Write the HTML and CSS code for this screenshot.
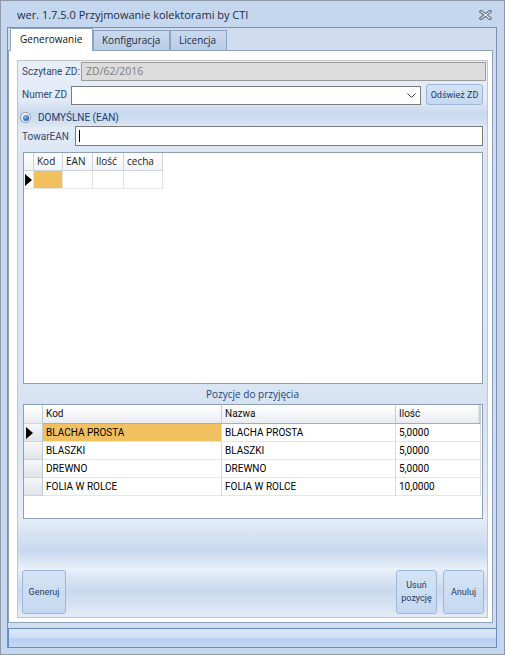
FILE: index.html
```html
<!DOCTYPE html>
<html lang="pl">
<head>
<meta charset="utf-8">
<title>Przyjmowanie kolektorami</title>
<link rel="stylesheet" href="styles.css">
</head>
<body>
<div class="window">
  <div class="titlebar">
    <span class="title">wer. 1.7.5.0 Przyjmowanie kolektorami by CTI</span>
    <svg class="close" width="13" height="10" viewBox="0 0 13 10">
      <path d="M2 1.5 L11 8.5 M11 1.5 L2 8.5" stroke="#56657a" stroke-width="3.2" stroke-linecap="square" fill="none"/>
      <path d="M2 1.5 L11 8.5 M11 1.5 L2 8.5" stroke="#f4f7fb" stroke-width="1.2" stroke-linecap="square" fill="none"/>
    </svg>
  </div>
  <div class="client">
    <div class="tabs">
      <div class="tab active">Generowanie</div>
      <div class="tab konf">Konfiguracja</div>
      <div class="tab lic">Licencja</div>
    </div>
    <div class="page">
      <div class="panel">
        <div class="row row-zd">
          <span class="label lbl-zd">Sczytane ZD:</span>
          <div class="input readonly">ZD/62/2016</div>
        </div>
        <div class="row row-num">
          <span class="label lbl-num">Numer ZD</span>
          <div class="combo">
            <svg class="chev" width="9" height="6" viewBox="0 0 9 6"><path d="M0.5 0.5 L4.5 4.5 L8.5 0.5" stroke="#3a3a3a" stroke-width="1" fill="none"/></svg>
          </div>
          <div class="btn btn-refresh">Odśwież ZD</div>
        </div>
        <div class="row row-radio">
          <span class="radio"><span class="dot"></span></span>
          <span class="radio-text">DOMYŚLNE (EAN)</span>
        </div>
        <div class="row row-ean">
          <span class="label lbl-ean">TowarEAN</span>
          <div class="input ean"><span class="caret"></span></div>
        </div>

        <div class="grid grid1">
          <div class="g1-row g1-head">
            <div class="c rh"></div>
            <div class="c w-kod">Kod</div>
            <div class="c w-ean">EAN</div>
            <div class="c w-ilosc">Ilość</div>
            <div class="c w-cecha">cecha</div>
          </div>
          <div class="g1-row g1-data">
            <div class="c rh"><span class="tri"></span></div>
            <div class="c w-kod sel"></div>
            <div class="c w-ean"></div>
            <div class="c w-ilosc"></div>
            <div class="c w-cecha"></div>
          </div>
        </div>

        <div class="caption">Pozycje do przyjęcia</div>

        <div class="grid grid2">
          <div class="g2-row g2-head">
            <div class="c rh"></div>
            <div class="c k">Kod</div>
            <div class="c n">Nazwa</div>
            <div class="c q">Ilość</div>
          </div>
          <div class="g2-row">
            <div class="c rh"><span class="tri"></span></div>
            <div class="c k sel">BLACHA PROSTA</div>
            <div class="c n">BLACHA PROSTA</div>
            <div class="c q">5,0000</div>
          </div>
          <div class="g2-row">
            <div class="c rh"></div>
            <div class="c k">BLASZKI</div>
            <div class="c n">BLASZKI</div>
            <div class="c q">5,0000</div>
          </div>
          <div class="g2-row">
            <div class="c rh"></div>
            <div class="c k">DREWNO</div>
            <div class="c n">DREWNO</div>
            <div class="c q">5,0000</div>
          </div>
          <div class="g2-row">
            <div class="c rh"></div>
            <div class="c k">FOLIA W ROLCE</div>
            <div class="c n">FOLIA W ROLCE</div>
            <div class="c q">10,0000</div>
          </div>
        </div>

        <div class="actions">
          <div class="btn big gen">Generuj</div>
          <div class="btn big del">Usuń<br>pozycję</div>
          <div class="btn big cancel">Anuluj</div>
        </div>
      </div>
    </div>
    <div class="statusbar"></div>
  </div>
</div>
</body>
</html>
```
FILE: styles.css
```css
* { box-sizing: border-box; }
html, body { margin: 0; padding: 0; }
body { width: 505px; height: 655px; overflow: hidden; background: #c4d6ed; }

.window {
  width: 505px; height: 655px;
  border: 1px solid #8e9aaa;
  background: #c5d7ee;
  display: flex; flex-direction: column;
}

.titlebar {
  height: 26px;
  display: flex; align-items: center;
  padding-left: 16px;
  padding-top: 1px;
}
.title {
  font-family: "Open Sans", sans-serif;
  font-size: 11px;
  color: #1b2c45;
}
.close { margin-left: auto; margin-right: 12px; margin-top: 1px; }

.client {
  margin-left: 6px;
  width: 490px;
  height: 621px;
  border: 1px solid #7b8fae;
  border-bottom: none;
  background: #d0ddee;
}

.tabs {
  height: 22px;
  display: flex; align-items: flex-end;
  padding-left: 2px;
}
.tab {
  font-family: "Open Sans", sans-serif;
  font-size: 10px;
  color: #1e2c44;
  height: 20px;
  border: 1px solid #8ea3c1;
  border-bottom: none;
  background: linear-gradient(#c9daef, #b9cce6);
  padding-left: 8px;
  line-height: 19px;
}
.tab.active {
  width: 83px; height: 23px;
  margin-bottom: -1px;
  background: #ffffff;
  position: relative; z-index: 1;
  padding-left: 9px;
  line-height: 21px;
  color: #111;
}
.tab.konf { width: 77px; }
.tab.lic { width: 57px; }

.page {
  width: 485px; height: 573px;
  border: 1px solid #8ea2bd;
  background: #ffffff;
  padding: 9px 4px 4px 8px;
}

.panel {
  width: 471px; height: 558px;
  border: 1px solid #c2c6cb;
  display: flex; flex-direction: column;
  background: linear-gradient(180deg,
    #e7eff9 0px, #e1eaf6 40px, #c9d9ee 52px, #d0def0 60px, #e3ebf7 68px,
    #dde7f4 90px, #dbe6f4 320px, #d5e2f2 343px,
    #e6eef8 457px, #c7d8ee 490px, #e9f0fa 508px, #c8d8ee 530px, #e4ecf7 556px);
}

.row { display: flex; align-items: center; }
.label {
  font-family: Roboto, sans-serif;
  font-size: 10px;
  color: #34466a;
  padding-left: 4px;
  flex: none;
}
.row-zd { margin-top: 1px; height: 19px; }
.lbl-zd { width: 63px; }
.input {
  height: 19px;
  border: 1px solid #7a7a7a;
  background: #fff;
  flex: none;
}
.readonly {
  width: 405px;
  background: #dcdcdc;
  border-color: #9b9b9b;
  font-family: "Open Sans", sans-serif;
  font-size: 10.5px;
  color: #7d7d7d;
  padding-left: 4px;
  line-height: 16px;
}

.row-num { margin-top: 3px; height: 21px; align-items: flex-end; }
.lbl-num { width: 53px; align-self: center; }
.combo {
  width: 350px; height: 19px;
  border: 1px solid #7c7c7c;
  background: #fff;
  display: flex; align-items: center; justify-content: flex-end;
  padding-right: 4px;
  padding-top: 1px;
}
.btn {
  border: 1px solid #9db7db;
  border-radius: 3px;
  background: linear-gradient(#d4e3f5, #c5d8ef);
  font-family: Roboto, sans-serif;
  font-size: 9px;
  color: #223a62;
  display: flex; align-items: center; justify-content: center;
  text-align: center;
  flex: none;
}
.btn-refresh { width: 57px; height: 21px; margin-left: 5px; }

.row-radio { height: 21px; }
.radio {
  width: 11px; height: 11px;
  margin-left: 2px; margin-top: 4px;
  border-radius: 50%;
  border: 1px solid #8b98ab;
  background: #eef2f7;
  display: flex; align-items: center; justify-content: center;
}
.dot {
  width: 6px; height: 6px; border-radius: 50%;
  background: radial-gradient(circle at 40% 35%, #8fc0f0 0, #2d6fbf 55%, #1b4f96 100%);
}
.radio-text {
  font-family: Roboto, sans-serif;
  font-size: 10px;
  color: #1d3a72;
  margin-left: 7px;
  margin-top: 3px;
}

.row-ean { height: 20px; }
.lbl-ean { width: 57px; }
.ean { width: 408px; height: 20px; position: relative; }
.caret {
  position: absolute; left: 3px; top: 3px;
  width: 1px; height: 12px; background: #000;
}

.grid {
  margin-left: 5px;
  width: 460px;
  border: 1px solid #8d9fb8;
  background: #fff;
  flex: none;
}
.grid1 { margin-top: 6px; height: 232px; }
.c {
  flex: none;
  height: 100%;
  border-right: 1px solid #d6dae0;
  border-bottom: 1px solid #d6dae0;
  white-space: nowrap;
  overflow: hidden;
}
.g1-row { display: flex; height: 18px; }
.g1-head .c {
  background: linear-gradient(#fdfdfe, #f1f4f7);
  font-family: "Open Sans", sans-serif;
  font-size: 10px;
  color: #1a1a1a;
  padding-left: 3px;
  line-height: 17px;
  border-color: #cfd4db;
}
.g1-data .c { border-color: #e3e3e3; }
.grid1 .rh { width: 10px; padding-left: 0; position: relative; }
.w-kod { width: 29px; }
.w-ean { width: 30px; }
.w-ilosc { width: 31px; }
.w-cecha { width: 39px; }
.sel { background: #f1c160; }
.tri {
  position: absolute; left: 2px; top: 3px;
  width: 0; height: 0;
  border-left: 7px solid #000;
  border-top: 6px solid transparent;
  border-bottom: 6px solid transparent;
}
.grid1 .tri { left: 1px; }

.caption {
  height: 20px;
  text-align: center;
  font-family: "Open Sans", sans-serif;
  font-size: 10px;
  color: #24437a;
  line-height: 21px;
  flex: none;
}

.grid2 { height: 115px; }
.g2-row { display: flex; height: 18px; }
.g2-head { height: 19px; }
.g2-row .c {
  font-family: Roboto, sans-serif;
  font-size: 10px;
  color: #000;
  padding-left: 3px;
  line-height: 17px;
  border-right-color: #dadada;
  border-bottom-color: #e6e6e6;
}
.g2-head .c {
  background: linear-gradient(#ffffff, #e9edf2);
  border-right-color: #c5ccd6;
  border-bottom-color: #9fb0c6;
  line-height: 18px;
  color: #111;
}
.g2-head .q { box-shadow: inset -2px 0 2px -1px #b8c2cf; }
.grid2 .rh {
  width: 19px; position: relative; padding-left: 0;
  background: linear-gradient(#f6f7f9, #dfe4ea);
  border-right-color: #c3cad3 !important;
  border-bottom-color: #cfd5dc !important;
}
.g2-head .rh { background: linear-gradient(#ffffff, #e9edf2); }
.k { width: 179px; }
.n { width: 174px; }
.q { width: 85px; }
.g2-row .sel { background: #f1c160; }

.actions {
  flex: 1;
  display: flex; align-items: flex-end;
  padding: 0 3px 3px 4px;
  gap: 6px;
}
.big { width: 41px; height: 44px; line-height: 13px; }
.gen { width: 44px; margin-right: auto; }

.statusbar {
  margin-top: 5px;
  width: 489px; height: 20px;
  border: 1px solid #6a8bbd;
  background: linear-gradient(#dce8f9, #cddff6 45%, #b9d1f1 55%, #c3d8f3);
}
```
